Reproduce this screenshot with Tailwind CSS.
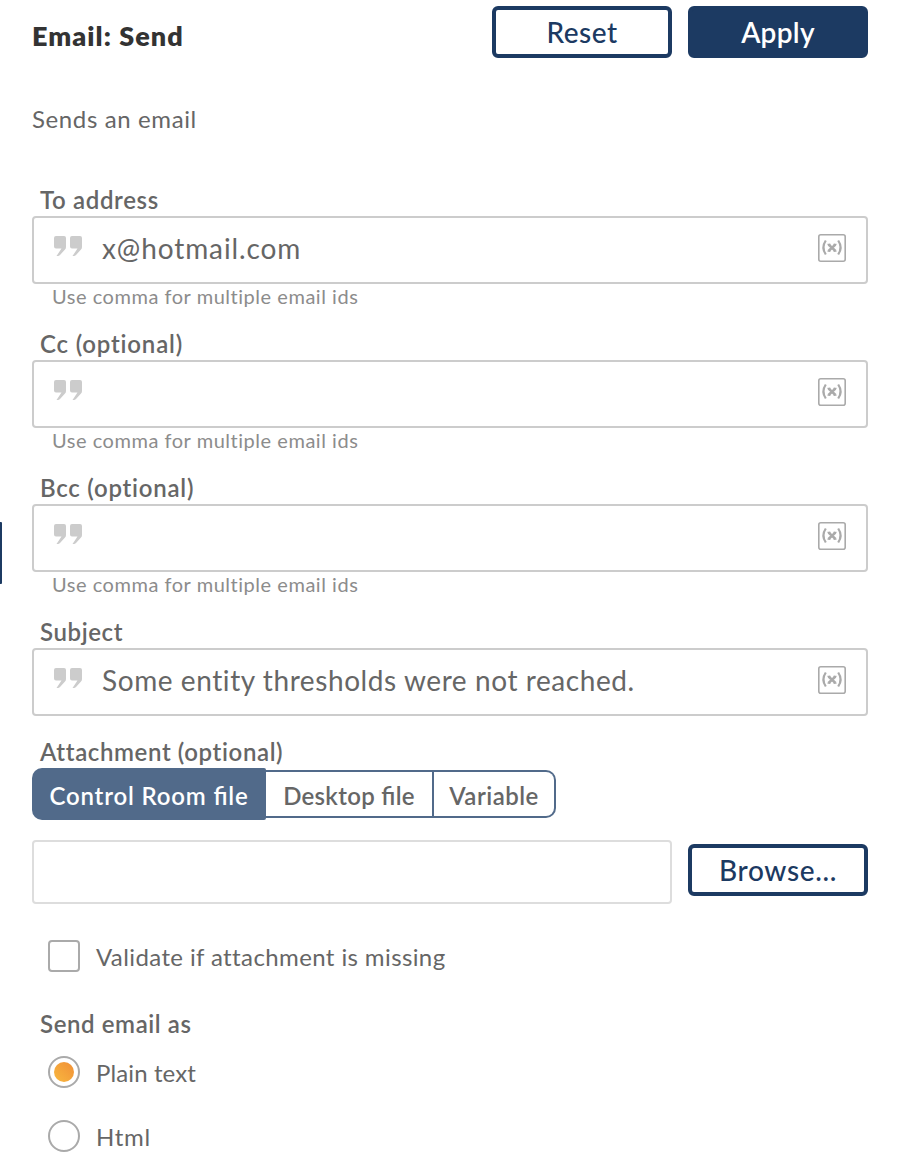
<!DOCTYPE html>
<html lang="en">
<head>
<meta charset="utf-8">
<title>Email: Send</title>
<script src="https://cdn.jsdelivr.net/npm/@tailwindcss/browser@4"></script>
</head>
<body class="bg-white font-['Lato',sans-serif] text-2xl text-[#666]">
<svg class="hidden">
  <symbol id="quote" viewBox="0 0 28 20"><path d="M2 0h8a2 2 0 0 1 2 2v9Q12 12.500 11 13.500L6 19Q5 20 4 20H2.500L7.500 12.500H2a2 2 0 0 1-2-2V2a2 2 0 0 1 2-2zM18 0h8a2 2 0 0 1 2 2v9Q28 12.500 27 13.500L22 19Q21 20 20 20H18.500L23.500 12.500H18a2 2 0 0 1-2-2V2a2 2 0 0 1 2-2z" fill="#ccc"/></symbol>
  <symbol id="var" viewBox="0 0 28 28"><rect x=".8" y=".8" width="26.400" height="26.400" rx="2" fill="none" stroke="#aaa" stroke-width="1.600"/><path d="M7.800 6.500Q3 13.500 7.800 20.500M20.200 6.500Q25 13.500 20.200 20.500" fill="none" stroke="#aaa" stroke-width="2.200"/><path d="M10.500 10.500l7 6.500M17.500 10.500l-7 6.500" fill="none" stroke="#aaa" stroke-width="2.400"/><path d="M9.500 10.300h3M15.500 10.300h3M9.500 17.200h3M15.500 17.200h3" fill="none" stroke="#aaa" stroke-width="1.200"/></symbol>
</svg>
<main class="relative h-[1168px] w-[900px] overflow-hidden px-8 pt-[6px]">
  <div class="absolute top-[522px] left-0 h-[62px] w-[2px] rounded-r-[1px] bg-[#1c3a62]"></div>
  <header class="flex h-[52px] gap-4">
    <h1 class="flex-1 pt-[14px] text-[27px] leading-8 font-extrabold tracking-[1.05px] text-[#333]">Email: Send</h1>
    <button class="w-[180px] rounded-md border-4 border-[#1c3a62] pt-px text-[28px] font-medium tracking-[0.5px] text-[#1c3a62]">Reset</button>
    <button class="w-[180px] rounded-md border-4 border-[#1c3a62] bg-[#1c3a62] pt-px text-[28px] font-semibold tracking-[0.3px] text-white">Apply</button>
  </header>
  <p class="mt-[45px] leading-8 tracking-[0.62px]">Sends an email</p>
  <form class="mt-[47px] flex flex-col gap-[18px]">
    <div>
      <label class="block h-[34px] pt-px pl-2 leading-[34px] font-semibold tracking-[0.65px]">To address</label>
      <div class="flex h-[68px] items-center rounded-[4px] border-2 border-[#ccc] px-5"><svg class="-mt-[8px] h-5 w-7"><use href="#quote"/></svg><div class="ml-5 flex-1 pb-1 text-[28px] leading-9 tracking-[0.9px]">x@hotmail.com</div><svg class="-mt-1 size-7"><use href="#var"/></svg></div>
      <p class="h-6 pl-5 text-xl leading-6 tracking-[0.53px] text-[#8c8c8c]">Use comma for multiple email ids</p>
    </div>
    <div>
      <label class="block h-[34px] pt-px pl-2 leading-[34px] font-semibold tracking-[0.82px]">Cc (optional)</label>
      <div class="flex h-[68px] items-center rounded-[4px] border-2 border-[#ccc] px-5"><svg class="-mt-[8px] h-5 w-7"><use href="#quote"/></svg><div class="ml-5 flex-1"></div><svg class="-mt-1 size-7"><use href="#var"/></svg></div>
      <p class="h-6 pl-5 text-xl leading-6 tracking-[0.53px] text-[#8c8c8c]">Use comma for multiple email ids</p>
    </div>
    <div>
      <label class="block h-[34px] pt-px pl-2 leading-[34px] font-semibold tracking-[0.77px]">Bcc (optional)</label>
      <div class="flex h-[68px] items-center rounded-[4px] border-2 border-[#ccc] px-5"><svg class="-mt-[8px] h-5 w-7"><use href="#quote"/></svg><div class="ml-5 flex-1"></div><svg class="-mt-1 size-7"><use href="#var"/></svg></div>
      <p class="h-6 pl-5 text-xl leading-6 tracking-[0.53px] text-[#8c8c8c]">Use comma for multiple email ids</p>
    </div>
    <div>
      <label class="block h-[34px] pt-px pl-2 leading-[34px] font-semibold tracking-[0.6px]">Subject</label>
      <div class="flex h-[68px] items-center rounded-[4px] border-2 border-[#ccc] px-5"><svg class="-mt-[8px] h-5 w-7"><use href="#quote"/></svg><div class="ml-5 flex-1 pb-1 text-[28px] leading-9 tracking-[0.58px]">Some entity thresholds were not reached.</div><svg class="-mt-1 size-7"><use href="#var"/></svg></div>
    </div>
    <div>
      <label class="block h-[34px] pt-px pl-2 leading-[34px] font-semibold tracking-[0.62px]">Attachment (optional)</label>
      <div class="flex h-[52px] items-center font-semibold">
        <button type="button" class="h-[52px] w-[234px] rounded-l-[10px] rounded-r-[2px] bg-[#516a8a] pt-[3px] tracking-[0.83px] text-white">Control Room <span class="[font-feature-settings:'liga']">file</span></button>
        <button type="button" class="h-12 w-[168px] border-y-2 border-r-2 border-[#516a8a] pt-[3px] tracking-[0.3px]">Desktop <span class="[font-feature-settings:'liga']">file</span></button>
        <button type="button" class="h-12 w-[122px] rounded-r-[10px] border-y-2 border-r-2 border-[#516a8a] pt-[3px] tracking-[0.5px]">Variable</button>
      </div>
      <div class="mt-5 flex h-16 items-start gap-4">
        <div class="h-16 flex-1 rounded-[4px] border-2 border-[#ddd]"></div>
        <button type="button" class="mt-1 h-[52px] w-[180px] rounded-md border-4 border-[#1c3a62] pt-px text-[28px] font-medium tracking-[0.65px] text-[#1c3a62]">Browse...</button>
      </div>
    </div>
  </form>
  <div class="mt-9 flex h-8 items-center gap-4 pl-4"><span class="size-8 rounded-[4px] border-2 border-[#aaa]"></span><span class="pt-[2px] tracking-[0.39px]">Validate if attachment is missing</span></div>
  <div class="mt-[34px] h-[34px] pt-px pl-2 leading-[34px] font-semibold tracking-[0.6px]">Send email as</div>
  <div class="mt-4 flex h-8 items-center gap-4 pl-4"><span class="flex size-8 items-center justify-center rounded-full border-2 border-[#aaa]"><span class="size-5 rounded-full bg-linear-to-tr from-[#f8b83f] to-[#f08f37]"></span></span><span class="pt-[2px] tracking-[0.12px]">Plain text</span></div>
  <div class="mt-8 flex h-8 items-center gap-4 pl-4"><span class="size-8 rounded-full border-2 border-[#aaa]"></span><span class="pt-[2px] tracking-[0.7px]">Html</span></div>
</main>
</body>
</html>
